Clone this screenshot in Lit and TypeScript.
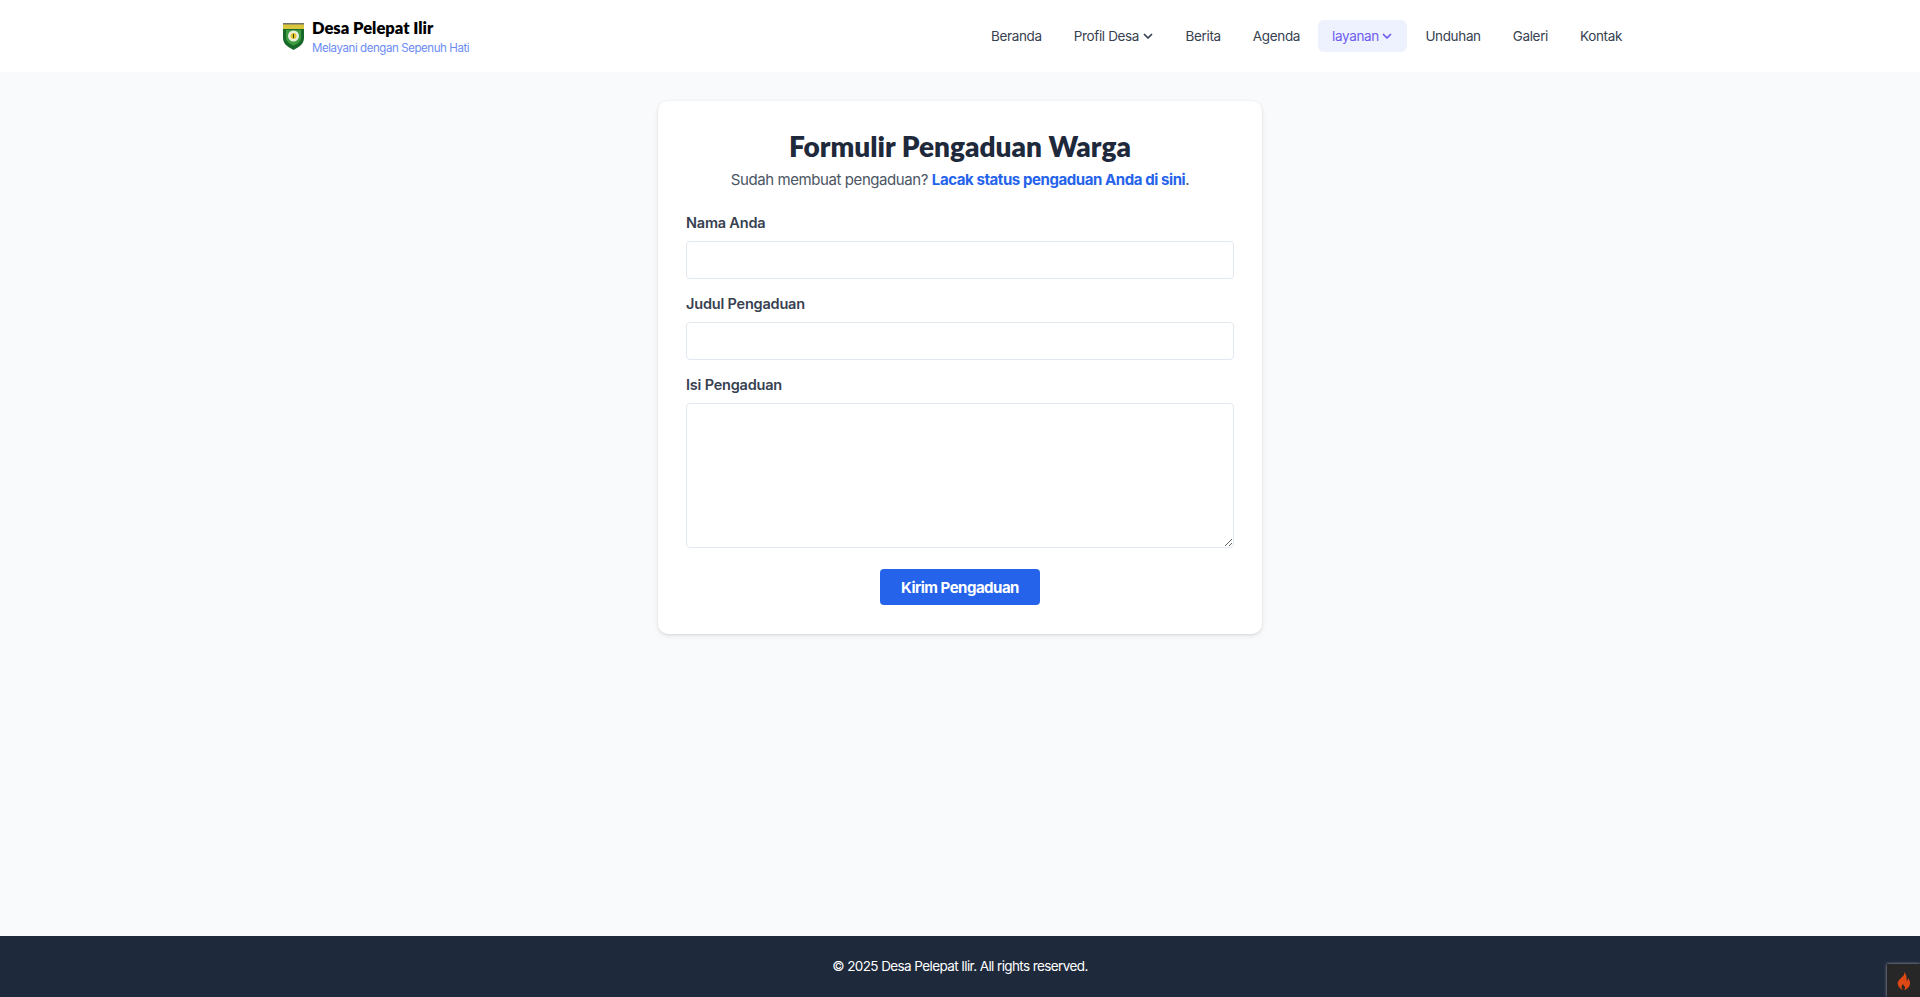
import { LitElement, html, css, svg } from "lit";
import { customElement } from "lit/decorators.js";

const chevron = svg`<svg class="chev" viewBox="0 0 24 24" width="12" height="12" fill="none" stroke="currentColor" stroke-width="3.5" stroke-linecap="round" stroke-linejoin="round"><path d="M5 9l7 7 7-7"/></svg>`;

@customElement("app-root")
export class AppRoot extends LitElement {
  static styles = css`
    :host { display: block; font-family: Inter, "Noto Sans", sans-serif; color: #1f2937; }
    * { box-sizing: border-box; }
    .page { min-height: 997px; display: flex; flex-direction: column; background: #f8fafc; }
    header { background: #fff; height: 72px; }
    .bar { width: 1360px; margin: 0 auto; height: 100%; padding-right: 4px; display: flex; align-items: center; justify-content: space-between; }
    .brand { display: flex; align-items: center; gap: 8px; padding-left: 3px; }
    .brand-title { font-family: Lato, sans-serif; font-weight: 800; font-size: 16.5px; line-height: 20px; margin-top: 1px; color: #000; }
    .brand-sub { font-size: 11.5px; letter-spacing: -0.42px; line-height: 16px; margin-top: 2px; color: #6b8cf5; }
    nav { display: flex; align-items: center; gap: 4px; font-size: 13.5px; letter-spacing: -0.35px; color: #374151; }
    nav a { display: flex; align-items: center; gap: 2.5px; height: 32px; padding: 0 14px; border-radius: 6px; }
    nav a.active { background: #eef2ff; color: #6d5cf0; }
    main { flex: 1; padding-top: 29px; display: flex; justify-content: center; align-items: flex-start; }
    .card { width: 604px; background: #fff; border-radius: 10px; padding: 25px 28px 29px; box-shadow: 0 1px 3px rgba(0,0,0,.1), 0 2px 6px rgba(0,0,0,.06); }
    h1 { margin: 0; font-family: Lato, sans-serif; text-align: center; font-size: 28px; line-height: 40px; font-weight: 800; color: #1e293b; }
    .lead { margin: 2px 0 0; text-align: center; font-size: 15px; letter-spacing: -0.42px; line-height: 24px; color: #4b5563; }
    .lead a { color: #2563eb; font-weight: 700; }
    .field { margin-top: 15px; }
    .field:first-of-type { margin-top: 21px; }
    label { display: block; font-size: 14.5px; letter-spacing: -0.2px; line-height: 20px; font-weight: 600; color: #374151; margin-bottom: 8px; }
    .input { display: block; width: 100%; height: 38px; border: 1px solid #e2e8f0; border-radius: 4px; background: #fff; padding: 8px; font: inherit; }
    textarea.input { height: 145px; resize: vertical; }
    .actions { display: flex; justify-content: center; margin-top: 21px; }
    button { height: 36px; width: 160px; border: 0; border-radius: 4px; background: #2563eb; color: #fff; font: 700 15px Inter, sans-serif; letter-spacing: -0.5px; }
    footer { height: 61px; background: #1e293b; color: #fff; display: flex; align-items: center; justify-content: center; font-size: 13.5px; letter-spacing: -0.6px; padding-bottom: 2px; }
    .debug { position: fixed; right: 0; bottom: 0; width: 33px; height: 33px; background: #272727; box-shadow: 0 0 3px rgba(255,255,255,.6); display: flex; align-items: center; justify-content: center; }
  `;

  render() {
    return html`<div class="page">
      <header><div class="bar">
        <div class="brand">
          <svg width="21" height="28" viewBox="0 0 21 28">
            <path d="M0 1h21v15c0 6-5 9-10.500 12C5 25 0 22 0 16z" fill="#17692a"/>
            <path d="M0 1h21v6H0z" fill="#d9c63c"/>
            <path d="M0 1h21v1.500H0z" fill="#6f7468"/>
            <path d="M3 8h15v7.500c0 4-3 6-7.500 8C6 21.500 3 19.500 3 15.500z" fill="#3d9c3f"/>
            <circle cx="10.500" cy="14" r="5.500" fill="#e9efe0"/>
            <circle cx="10.500" cy="14" r="3" fill="#e3c62e"/>
            <path d="M10 12h1v4h-1z" fill="#26411f"/>
          </svg>
          <div><div class="brand-title">Desa Pelepat Ilir</div><div class="brand-sub">Melayani dengan Sepenuh Hati</div></div>
        </div>
        <nav>
          <a>Beranda</a><a>Profil Desa ${chevron}</a><a>Berita</a><a>Agenda</a>
          <a class="active">layanan ${chevron}</a><a>Unduhan</a><a>Galeri</a><a>Kontak</a>
        </nav>
      </div></header>
      <main><form class="card">
        <h1>Formulir Pengaduan Warga</h1>
        <p class="lead">Sudah membuat pengaduan? <a>Lacak status pengaduan Anda di sini</a>.</p>
        <div class="field"><label>Nama Anda</label><input class="input"></div>
        <div class="field"><label>Judul Pengaduan</label><input class="input"></div>
        <div class="field"><label>Isi Pengaduan</label><textarea class="input"></textarea></div>
        <div class="actions"><button type="button">Kirim Pengaduan</button></div>
      </form></main>
      <footer>© 2025 Desa Pelepat Ilir. All rights reserved.</footer>
      <div class="debug"><svg width="14" height="18" viewBox="0 0 14 18"><path d="M7 0c1 3-1 4-3 6C2 8 0 10 1 13c.7 2.500 3 4.500 5 5-2-2-2-4 0-6 .5 2 2 2 2 4 0 1-.5 1.500-1 2 3-.5 6-3 6-7 0-2-1-4-2-5 0 1.500-.5 2.500-1.500 3C10 6 9.500 2 7 0z" fill="#dd4814"/></svg></div>
    </div>`;
  }
}
